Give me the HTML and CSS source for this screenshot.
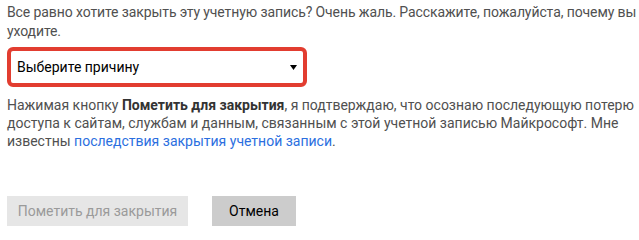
FILE: index.html
```html
<!DOCTYPE html>
<html lang="ru">
<head>
    <meta charset="UTF-8">
    <meta name="viewport" content="width=device-width, initial-scale=1.0">
    <title>Закрытие учетной записи</title>
    <link rel="stylesheet" href="styles.css">
</head>
<body>
    <div class="close-account">
        <p class="question">Все равно хотите закрыть эту учетную запись? Очень жаль. Расскажите, пожалуйста, почему вы уходите.</p>

        <div class="reason-frame">
            <div class="reason-select">
                <span>Выберите причину</span>
                <svg class="arrow" width="7" height="5" viewBox="0 0 7 5"><path d="M0 0h7L3.5 5z" fill="#000"/></svg>
            </div>
        </div>

        <p class="notice">
            Нажимая кнопку <b>Пометить для закрытия</b>, я подтверждаю, что осознаю последующую потерю
            доступа к сайтам, службам и данным, связанным с этой учетной записью Майкрософт. Мне
            известны <a href="#">последствия закрытия учетной записи</a>.
        </p>

        <div class="actions">
            <button class="btn btn-disabled" disabled>Пометить для закрытия</button>
            <button class="btn btn-cancel">Отмена</button>
        </div>
    </div>
</body>
</html>
```

FILE: styles.css
```css
body {
    margin: 0;
    background-color: white;
    font-family: Roboto, 'Noto Sans', sans-serif;
    font-size: 14px;
    color: #505050;
}

.close-account {
    width: 630px;
    padding: 3px 0 0 7px;
}

.question {
    margin: 0;
    line-height: 19px;
    letter-spacing: -0.1px;
}

.reason-frame {
    margin-top: 6px;
    width: 292px;
    border: 4px solid #e23d30;
    border-radius: 6px;
    background-color: white;
}

.reason-select {
    display: flex;
    align-items: center;
    justify-content: space-between;
    height: 32px;
    padding: 0 6px 0 6px;
    color: black;
}

.notice {
    margin: 9px 0 0 0;
    line-height: 18px;
}

.notice b {
    color: #333;
}

.notice a {
    color: #2b6fe0;
    text-decoration: none;
}

.actions {
    display: flex;
    gap: 24px;
    margin-top: 46px;
}

.btn {
    height: 30px;
    border: none;
    font-family: inherit;
    font-size: 14px;
    padding: 0;
    white-space: nowrap;
}

.btn-disabled {
    width: 181px;
    background-color: #e6e6e6;
    color: #9a9a9a;
}

.btn-cancel {
    width: 84px;
    background-color: #cccccc;
    color: black;
}
```
